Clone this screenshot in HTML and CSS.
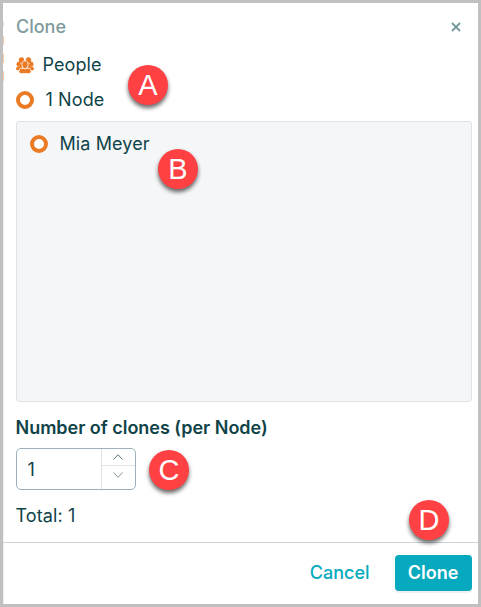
FILE: index.html
```html
<!DOCTYPE html>
<html lang="en">
<head>
    <meta charset="UTF-8">
    <meta name="viewport" content="width=device-width, initial-scale=1.0">
    <title>Clone</title>
    <link rel="stylesheet" href="styles.css">
</head>
<body>
    <div class="dialog">
        <div class="header">
            <span class="title">Clone</span>
            <svg class="close" viewBox="0 0 10 10"><path d="M1 1l8 8M9 1l-8 8"/></svg>
        </div>

        <div class="content">
            <div class="row people">
                <svg class="people-icon" viewBox="0 0 18 17">
                    <ellipse cx="5.500" cy="3.200" rx="2.700" ry="3"/>
                    <ellipse cx="12.500" cy="3.200" rx="2.700" ry="3"/>
                    <ellipse cx="2.500" cy="7.200" rx="2" ry="2.400"/>
                    <ellipse cx="15.500" cy="7.200" rx="2" ry="2.400"/>
                    <path d="M4 7l3-1.500h4L14 7v4H4z"/>
                    <path d="M0 12q.3-2.500 2.600-2.700l3.400.700v3.200H1Q0 13.200 0 12zM18 12q-.3-2.500-2.600-2.700l-3.400.700v3.200h5q1 0 1-1.200z"/>
                    <path class="front" d="M2.800 14.300q.2-3.200 3.200-3.400 3 1.800 6 0 3 .2 3.200 3.400 0 2.300-1.800 2.300H4.600q-1.800 0-1.800-2.300z"/>
                    <ellipse class="front" cx="9" cy="7.800" rx="3.100" ry="4"/>
                </svg>
                <span>People</span>
            </div>
            <div class="row nodes">
                <span class="ring"></span>
                <span>1 Node</span>
            </div>

            <div class="list">
                <div class="row item">
                    <span class="ring"></span>
                    <span>Mia Meyer</span>
                </div>
            </div>

            <div class="label">Number of clones (per Node)</div>
            <div class="number">
                <span class="value">1</span>
                <div class="spinner">
                    <div class="step up"><svg viewBox="0 0 10 6"><path d="M.5 5.500L5 .7l4.500 4.800"/></svg></div>
                    <div class="step down"><svg viewBox="0 0 10 6"><path d="M.5.5L5 5.300 9.500.5"/></svg></div>
                </div>
            </div>
            <div class="total">Total: 1</div>
        </div>

        <div class="footer">
            <span class="cancel">Cancel</span>
            <span class="button">Clone</span>
        </div>
    </div>

    <!-- callouts over the dialog -->
    <div class="badge badge-a">A</div>
    <div class="badge badge-b">B</div>
    <div class="badge badge-c">C</div>
    <div class="badge badge-d">D</div>
</body>
</html>
```
FILE: styles.css
```css
* {
    box-sizing: border-box;
}
body {
    margin: 0;
    font-family: Inter, sans-serif;
    font-size: 18px;
    line-height: 24px;
    color: #0f4348;
    background: #c0c0c0;
}
.dialog {
    display: flex;
    flex-direction: column;
    width: 481px;
    height: 607px;
    border: 3px solid #c0c0c0;
    background: linear-gradient(
        #fff 19px, #ddd 19px, #ddd 23px, #fff 23px,
        #fff 33px, #f8c9a4 33px, #f8c9a4 42px, #fff 42px,
        #fff 51px, #f8c9a4 51px, #f8c9a4 60px, #fff 60px,
        #fff 68px, #f8c9a4 68px, #f8c9a4 78px, #edf1f2 78px
    ) no-repeat 0 0 / 1px 100% #fff;
}
.header {
    display: flex;
    justify-content: space-between;
    align-items: center;
    height: 48px;
    padding: 0 17px 0 13px;
}
.title {
    color: #7f9b9d;
    font-weight: 500;
}
.close {
    width: 10px;
    height: 10px;
    fill: none;
    stroke: #73979b;
    stroke-width: 1.8;
}
.content {
    flex: 1;
    padding: 0 6px 0 12.5px;
}
.row {
    display: flex;
    align-items: center;
    letter-spacing: 0.1px;
}
.people {
    height: 28px;
    gap: 9px;
}
.people-icon {
    width: 18px;
    height: 17px;
    fill: #ea7a24;
}
.front {
    stroke: #fff;
    stroke-width: 0.8;
}
.nodes {
    height: 42px;
    gap: 12px;
}
.ring {
    width: 18px;
    height: 18px;
    border: 4px solid #ea7a24;
    border-radius: 50%;
    background: #fff;
}
.list {
    height: 281px;
    padding: 9px 13px;
    border: 1px solid #dfe3e6;
    border-radius: 3px;
    background: #f4f6f8;
}
.item {
    height: 26px;
    gap: 12px;
}
.label {
    margin-top: 14px;
    font-weight: 600;
    letter-spacing: -0.02px;
}
.number {
    display: flex;
    width: 120px;
    height: 42px;
    margin-top: 8px;
    border: 1px solid #9cb1bb;
    border-radius: 5px;
}
.value {
    flex: 1;
    padding-left: 11px;
    line-height: 41px;
}
.spinner {
    display: flex;
    flex-direction: column;
    width: 34px;
    border-left: 1px solid #dfe3e6;
}
.step {
    display: flex;
    flex: 1;
    justify-content: center;
    align-items: center;
}
.step svg {
    width: 10px;
    height: 6px;
    fill: none;
    stroke: #819599;
    stroke-width: 1;
}
.up {
    flex: 0 0 17px;
    border-bottom: 1px solid #dfe3e6;
}
.up svg {
    stroke: #56757b;
}
.down {
    padding-bottom: 6px;
}
.total {
    margin-top: 14px;
    letter-spacing: 0.1px;
}
.footer {
    display: flex;
    justify-content: flex-end;
    align-items: center;
    gap: 25px;
    height: 62px;
    padding: 0 6.5px 1px 0;
    border-top: 1px solid #cad3d9;
    font-weight: 500;
}
.cancel {
    color: #06a9bd;
}
.button {
    width: 77px;
    height: 36px;
    border-radius: 4px;
    background: #06a9bd;
    box-shadow: 0 2px 1px #f0f0f0;
    color: #fff;
    font-weight: 600;
    line-height: 36px;
    text-align: center;
}
.badge {
    position: absolute;
    width: 40px;
    height: 40px;
    border-radius: 50%;
    background: #ff4144;
    box-shadow: 0 3px 4px rgba(0, 0, 0, 0.6);
    color: #fff;
    font-family: "Liberation Sans", Arial, sans-serif;
    font-size: 29px;
    line-height: 41px;
    text-align: center;
}
.badge-a {
    left: 128px;
    top: 65px;
}
.badge-b {
    left: 158px;
    top: 149px;
}
.badge-c {
    left: 149px;
    top: 450px;
}
.badge-d {
    left: 409px;
    top: 500px;
}
```
